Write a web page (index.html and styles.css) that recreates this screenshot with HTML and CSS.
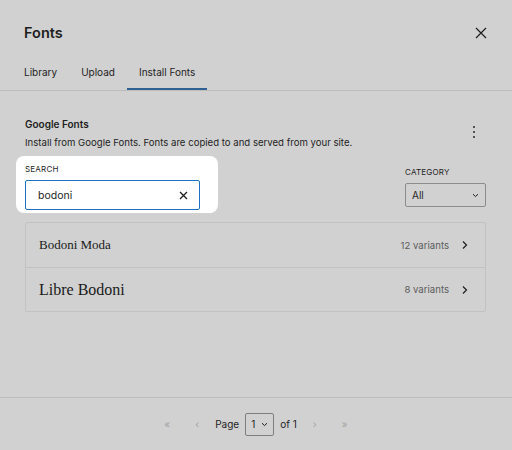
FILE: index.html
```html
<!DOCTYPE html>
<html lang="en">
<head>
<meta charset="utf-8">
<title>Fonts</title>
<link rel="stylesheet" href="styles.css">
</head>
<body>
<div class="modal">
  <header class="head">
    <h1 class="title">Fonts</h1>
    <button class="close" aria-label="Close">
      <svg width="12" height="12" viewBox="0 0 12 12"><path d="M1 1L11 11M11 1L1 11" stroke="#1e1e1e" stroke-width="1.2" fill="none"/></svg>
    </button>
  </header>
  <nav class="tabs">
    <span class="tab">Library</span>
    <span class="tab">Upload</span>
    <span class="tab active">Install Fonts</span>
  </nav>
  <main class="content">
    <div class="intro">
      <div class="intro-text">
        <h2 class="section-title">Google Fonts</h2>
        <p class="desc">Install from Google Fonts. Fonts are copied to and served from your site.</p>
      </div>
      <button class="kebab" aria-label="More">
        <svg width="4" height="14" viewBox="0 0 4 14"><circle cx="2" cy="2" r="0.95" fill="#1e1e1e"/><circle cx="2" cy="7" r="0.95" fill="#1e1e1e"/><circle cx="2" cy="12" r="0.95" fill="#1e1e1e"/></svg>
      </button>
    </div>
    <div class="filters">
      <div class="spot">
        <div class="label">SEARCH</div>
        <div class="input">
          <span class="input-text">bodoni</span>
          <svg width="9" height="9" viewBox="0 0 9 9"><path d="M1 1L8 8M8 1L1 8" stroke="#1e1e1e" stroke-width="1.3" fill="none"/></svg>
        </div>
      </div>
      <div class="category">
        <div class="label">CATEGORY</div>
        <div class="select">
          <span>All</span>
          <svg width="7" height="5" viewBox="0 0 7 5"><path d="M1 1.2L3.5 3.6L6 1.2" stroke="#1e1e1e" stroke-width="1" fill="none"/></svg>
        </div>
      </div>
    </div>
    <ul class="list">
      <li class="row">
        <span class="font-name moda">Bodoni Moda</span>
        <span class="variants">12 variants</span>
        <svg class="chev" width="16" height="16" viewBox="0 0 16 16"><path d="M6 4.5L9.5 8L6 11.5" stroke="#1e1e1e" stroke-width="1.2" fill="none"/></svg>
      </li>
      <li class="row">
        <span class="font-name libre">Libre Bodoni</span>
        <span class="variants">8 variants</span>
        <svg class="chev" width="16" height="16" viewBox="0 0 16 16"><path d="M6 4.5L9.5 8L6 11.5" stroke="#1e1e1e" stroke-width="1.2" fill="none"/></svg>
      </li>
    </ul>
  </main>
  <footer class="pager">
    <span class="pbtn dis">«</span>
    <span class="pbtn dis">‹</span>
    <span class="ptext">Page</span>
    <span class="psel"><span>1</span><svg width="7" height="5" viewBox="0 0 7 5"><path d="M1 1.2L3.5 3.6L6 1.2" stroke="#1e1e1e" stroke-width="1" fill="none"/></svg></span>
    <span class="ptext">of 1</span>
    <span class="pbtn dis">›</span>
    <span class="pbtn dis">»</span>
  </footer>
</div>
</body>
</html>
```

FILE: styles.css
```css
* { box-sizing: border-box; }
html, body { margin: 0; padding: 0; }
body {
  background: #d1d1d1;
  font-family: Inter, "Noto Sans", "Liberation Sans", sans-serif;
  color: #1e1e1e;
}
button {
  border: 0;
  background: none;
  padding: 0;
  margin: 0;
  cursor: pointer;
}
.modal {
  width: 512px;
  height: 450px;
  display: flex;
  flex-direction: column;
  overflow: hidden;
}
.head {
  height: 54px;
  padding: 23px 21px 0 24px;
  display: flex;
  justify-content: space-between;
  align-items: flex-start;
}
.title {
  margin: 0;
  font-size: 14.5px;
  line-height: 20px;
  font-weight: 600;
}
.close {
  width: 20px;
  height: 20px;
  display: flex;
  align-items: center;
  justify-content: center;
}
.tabs {
  height: 37px;
  padding-left: 12px;
  display: flex;
  border-bottom: 1px solid #bdbdbd;
}
.tab {
  padding: 0 12px;
  height: 36px;
  display: flex;
  align-items: center;
  font-size: 10px;
  font-weight: 400;
}
.tab.active {
  box-shadow: inset 0 -2px 0 #2e6191;
}
.content {
  flex: 1;
  padding: 25px 26px 0 25px;
  display: flex;
  flex-direction: column;
}
.intro {
  display: flex;
  justify-content: space-between;
  align-items: center;
}
.section-title {
  margin: 0;
  font-size: 10px;
  line-height: 16px;
  font-weight: 600;
}
.desc {
  margin: 3px 0 0;
  font-size: 9.6px;
  line-height: 16px;
}
.kebab {
  width: 24px;
  height: 24px;
  display: flex;
  align-items: center;
  justify-content: center;
  margin-top: -4px;
}
.filters {
  margin-top: 5px;
  display: flex;
  justify-content: space-between;
  align-items: flex-end;
}
.spot {
  margin-left: -9px;
  padding: 8px 18px 3px 9px;
  background: #ffffff;
  border-radius: 8px;
}
.label {
  font-size: 8px;
  line-height: 10px;
  font-weight: 400;
  letter-spacing: 0.2px;
  margin-bottom: 6px;
}
.input {
  width: 175px;
  height: 30px;
  border: 1px solid #1f72c0;
  border-radius: 2px;
  display: flex;
  align-items: center;
  justify-content: space-between;
  padding: 0 11px 0 12px;
}
.input-text {
  font-size: 10.5px;
}
.category {
  margin-bottom: 6px;
}
.select {
  width: 81px;
  height: 24px;
  border: 1px solid #8c8c8c;
  border-radius: 2px;
  display: flex;
  align-items: center;
  justify-content: space-between;
  padding: 0 6px 0 6px;
  font-size: 10px;
}
.list {
  list-style: none;
  margin: 9px 0 0;
  padding: 0;
  border: 1px solid #c2c2c2;
  border-radius: 2px;
}
.row {
  height: 44px;
  display: flex;
  align-items: center;
  padding: 0 12px 0 13px;
}
.row + .row {
  border-top: 1px solid #c2c2c2;
}
.font-name {
  flex: 1;
  font-family: "Liberation Serif", "DejaVu Serif", serif;
  color: #1a1a1a;
}
.moda { font-size: 13px; }
.libre { font-size: 16px; }
.variants {
  font-size: 9.6px;
  color: #5c5c5c;
  margin-right: 8px;
}
.chev { display: block; }
.pager {
  height: 53px;
  border-top: 1px solid #bdbdbd;
  display: flex;
  justify-content: center;
  align-items: center;
  gap: 6px;
  font-size: 10px;
}
.pbtn {
  width: 24px;
  text-align: center;
  font-size: 10px;
}
.pbtn.dis { color: #a3a3a3; }
.psel {
  width: 29px;
  height: 23px;
  border: 1px solid #7e7e7e;
  border-radius: 2px;
  display: flex;
  align-items: center;
  justify-content: space-between;
  padding: 0 5px 0 5px;
}
.ptext { color: #1e1e1e; }
```
